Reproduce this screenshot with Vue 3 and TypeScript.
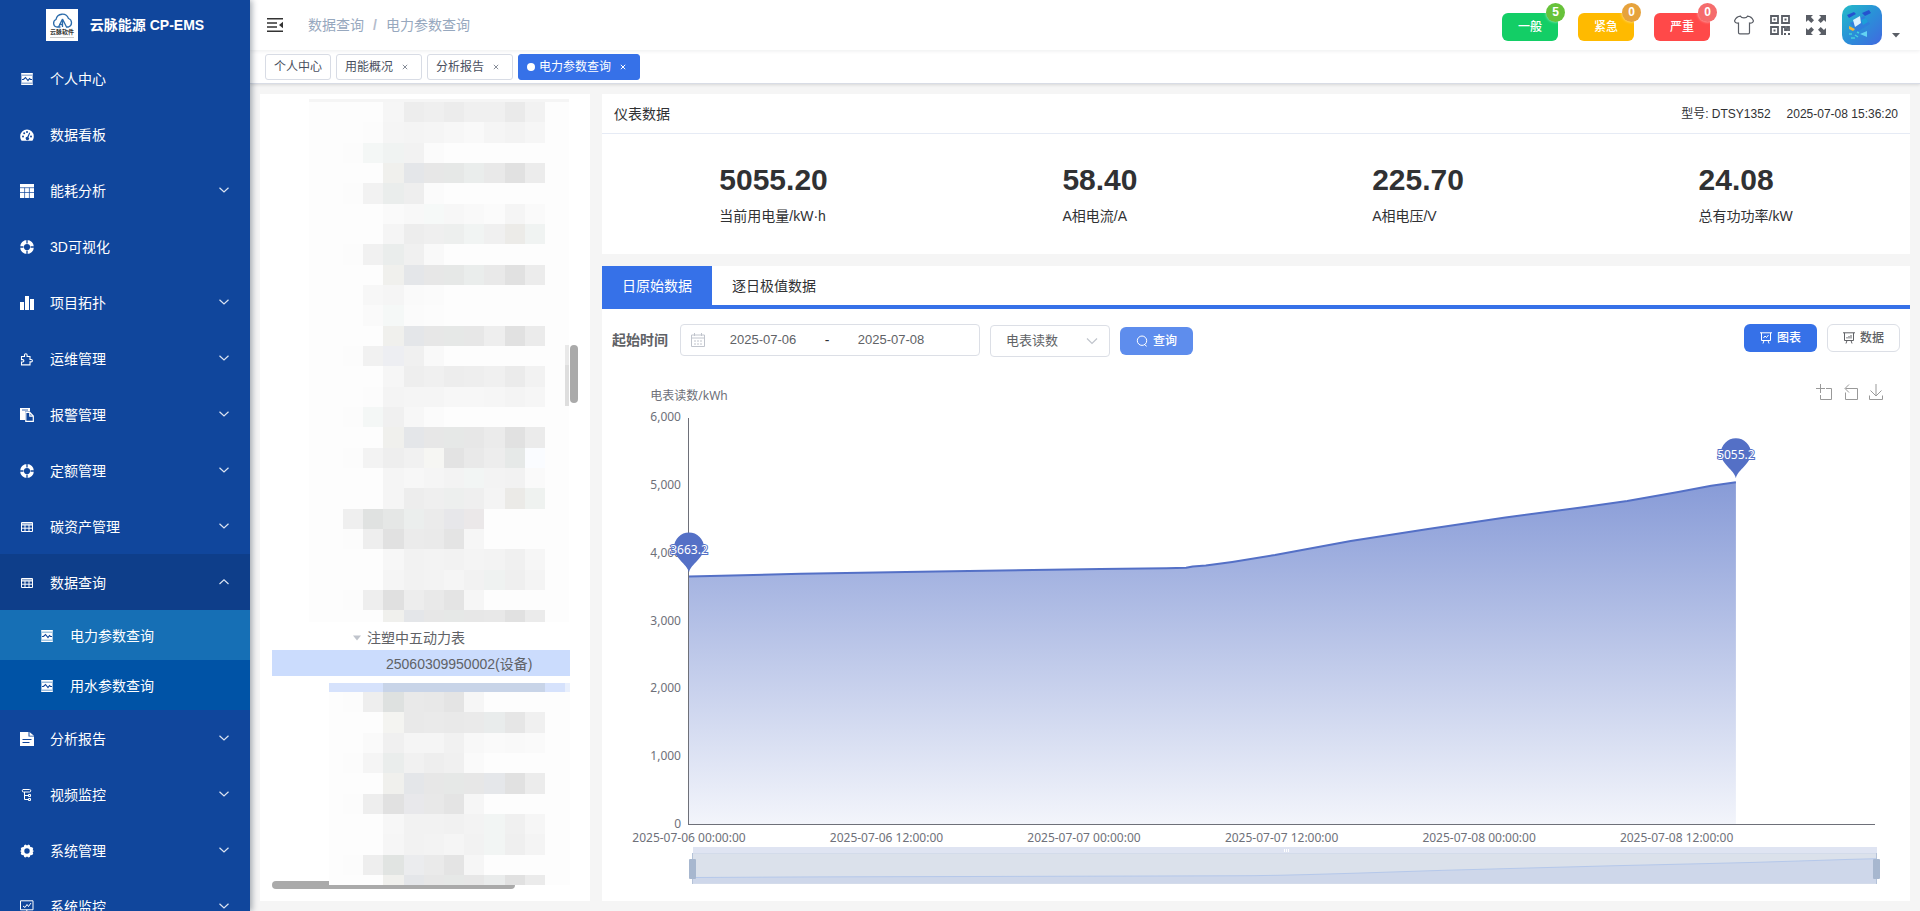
<script setup lang="ts">
import { ref } from 'vue'

interface MenuItem {
  label: string
  icon: string
  group?: boolean
  children?: { label: string; icon: string; active?: boolean }[]
}

const icons: Record<string, string> = {
  wave: '<path fill="#fff" opacity=".6" d="M1 1h12v12H1z"/><path fill="#fff" d="M1.500 1h11v1.500h-11zM2 4h10v6.500H2zM1.500 12h11v1h-11z"/><path stroke="#10469c" stroke-width="1.100" fill="none" d="M2 7.500h1.500l2-2 2.500 3 1.500-2 1 1h1.500"/>',
  gauge: '<path fill="#fff" d="M7 1.500a6.800 6.800 0 0 0-6.800 6.800c0 1.700.5 3.200 1.400 4.400h10.800c.9-1.200 1.400-2.700 1.400-4.400A6.800 6.800 0 0 0 7 1.500z"/><g fill="#10469c"><circle cx="3" cy="8.500" r="1"/><circle cx="4.200" cy="5.200" r="1"/><circle cx="7" cy="4" r="1"/><circle cx="11" cy="8.500" r="1"/><path d="m9.300 4.500.9.400-1.700 4.300a1.700 1.700 0 1 1-1.200-.4z"/></g>',
  grid: '<path fill="#fff" d="M0 0h14v14H0z"/><path stroke="#10469c" stroke-width=".7" d="M0 3.700h14M0 8.500h14M4.600 3.700V14M9.400 3.700V14"/>',
  ring: '<circle cx="7" cy="7" r="5" fill="none" stroke="#fff" stroke-width="3.800"/><path stroke="#10469c" stroke-width="1.300" d="M7 0v3.500M7 10.500V14M0 7h3.500M10.500 7H14"/>',
  bars: '<path fill="#fff" d="M0 6h4v8H0zM5 0h4v14H5zM10 3h4v11h-4z"/>',
  puzzle: '<path fill="none" stroke="#fff" stroke-width="1.100" d="M1.500 4.500h3V3a1.300 1.300 0 0 1 2.600 0v1.500h2.900v3h1.200a1.200 1.200 0 0 1 0 2.400H10v3H1.500V10h1.200a1.200 1.200 0 0 0 0-2.400H1.500z"/>',
  copy: '<path fill="#fff" d="M0 0h10v3.500H5V12H0z"/><path fill="none" stroke="#10469c" stroke-width=".8" d="M2 2h6"/><path fill="none" stroke="#fff" stroke-width="1.200" d="M5.800 4.400h4l3.500 3.700v5.300H5.800zM9.800 4.400v3.800h3.500"/>',
  table: '<path fill="none" stroke="#fff" stroke-width="1" d="M1.500 2.500h11v9h-11zM1.500 5h11M5 5v6.500M9 5v6.500M1.500 8.200h11"/><path fill="#fff" opacity=".55" d="M2 3h10v2H2z"/>',
  doc: '<path fill="#fff" d="M0 0h8.500v4.500H14V14H0z"/><path fill="#fff" d="m9.500 0 4.500 3.700H9.500z"/><path stroke="#10469c" stroke-width="1" d="M2.500 7.500h9M2.500 10.500h7"/>',
  video: '<path fill="none" stroke="#fff" stroke-width="1" d="M3 1.500h6.500a1 1 0 0 1 0 2.500H3.500a1.200 1.200 0 0 1 0-2.500M4.500 4v7.500h4M4.500 7.500h4M8.500 6.500h2v2h-2zM8.500 10.500h2v2h-2z"/>',
  gear: '<path fill="#fff" fill-rule="evenodd" d="M4.200 1.200 5.500.6l1.500 1L8.500.6l1.300.6.5 1.800 1.900.2 1 1.300-.5 1.700L14 7l-1.300 1 .5 1.700-1 1.300-1.900.2-.5 1.800-1.300.6-1.500-1-1.500 1-1.300-.6-.5-1.800-1.900-.2-1-1.300L1.300 8 0 7l1.300-.8L.8 4.500l1-1.300L3.700 3zM7 4.300a2.700 2.700 0 1 0 0 5.400 2.700 2.700 0 0 0 0-5.400z"/>',
  monitor: '<path fill="none" stroke="#fff" stroke-width="1" d="M.5.8h12.500v9H.5zM6.800 9.800V13M3.500 13h6.500M3 6l2 1.500 2-3 1.500 2L11 3"/>',
}

const menu: MenuItem[] = [
  { label: '个人中心', icon: 'wave' },
  { label: '数据看板', icon: 'gauge' },
  { label: '能耗分析', icon: 'grid', group: true },
  { label: '3D可视化', icon: 'ring' },
  { label: '项目拓扑', icon: 'bars', group: true },
  { label: '运维管理', icon: 'puzzle', group: true },
  { label: '报警管理', icon: 'copy', group: true },
  { label: '定额管理', icon: 'ring', group: true },
  { label: '碳资产管理', icon: 'table', group: true },
  {
    label: '数据查询', icon: 'table', group: true,
    children: [
      { label: '电力参数查询', icon: 'wave', active: true },
      { label: '用水参数查询', icon: 'wave' },
    ],
  },
  { label: '分析报告', icon: 'doc', group: true },
  { label: '视频监控', icon: 'video', group: true },
  { label: '系统管理', icon: 'gear', group: true },
  { label: '系统监控', icon: 'monitor', group: true },
]

const tags = [
  { label: '个人中心', closable: false, active: false },
  { label: '用能概况', closable: true, active: false },
  { label: '分析报告', closable: true, active: false },
  { label: '电力参数查询', closable: true, active: true },
]

const alarms = [
  { label: '一般', count: 5, kind: 'normal' },
  { label: '紧急', count: 0, kind: 'urgent' },
  { label: '严重', count: 0, kind: 'severe' },
]

const stats = [
  { value: '5055.20', label: '当前用电量/kW·h' },
  { value: '58.40', label: 'A相电流/A' },
  { value: '225.70', label: 'A相电压/V' },
  { value: '24.08', label: '总有功功率/kW' },
]

const startDate = ref('2025-07-06')
const endDate = ref('2025-07-08')
const metric = ref('电表读数')

// Masked tree rows: one colour per cell, "-" for an empty cell.
const maskTop = [
  '- - f6 ed ef ec f0 f0 eaeaea f2', '- fc f5 f4 f5 f7 f9 f5 f3 f6', 'fc f4f7f6 f0f3f2 f2 fb',
  '- - f0f0ed e4e6e9 e7 e6e8e7 eaedec e9 e1 ec', 'fc f2 eaedec ee fb', '- - fa f8 f6f9f8 f7 f9 fb f5 fa',
  '- - f5 ed ef edefee f1f4f3 f0 ecebe8 f0f3f2', 'fc f1 eaedec f0 f9',
  '- - f0f0ed e4e6e9 e7 e6e8e7 eaedec e9 e1 ec', '- f7 f5 fa fb', '- fa f5f8f7 fb fc',
  '- - f0f0ed e4e6e9 e7 e6e8e7 e7 ee e1 eb', 'fc f1 edeef2 f0 f9', '- - f6 ee f0 ed ee f0 eb f2',
  '- fc f4 f5 f5 f7 f7 f6 f4 f6', 'fc f4f7f6 f0 f7 fb', '- - f0f0ed e4e6e9 e7 e6e8e7 e7 eb e1 eb',
  'fc f3 ee f1 f6f6f3 e3 e9 ed e6e9e8 fafcff', '- - f5 f7 f5 f3 f2f5f4 f3 f2 fa',
  '- - f5 ed ef edefee ef f4 ebeae7 eff2f0', 'ef e0e2e1 e5e7e6 ebeeed eb e7e7ea ebe8e9',
  'fc ee e1 eb ea e4 f6', '- - f7 f2 f3 f2 f4 f3 f0 f6', '- - f5 f2 f3 f5 f2 eff2f1 ef f4',
  'fc ee e0 ed e9 e4 f6', '- - f0f0ed e4e6e9 e7 e6e8e7 e7 e8 e1 eb',
]
const maskBottom = [
  'fc ee dee1e0 e9 e8 e4 f6', '- - f4f4f1 e9 ea e9 ea e9ecec e6 f0', '- fa f0 f5 f5 f1 f8 fa f9 fa',
  'fc f5 eaedec f1 ee f0 fa', '- - f0f0ed e4e6e9 e7 e6e8e7 e7 e5e7ea e1 ec', 'fc ee e1 e8e8eb e8 e4 f6',
  '- - f7 f2 f2 f1 f3 f2f5f4 f0 f6', '- - f6 f2 f3 f5 f2 f2f5f4 ef f4', 'fc ee e1e4e2 ebecee ea e4 f6',
  '- - f0f0ed e4e6e9 e7 e6e8e7 e7 eaecec e1 eb',
]

const edge = (n: number) => Math.round((n * 61) / 3)

function cells(rows: string[], top: number) {
  return rows.flatMap((row, r) =>
    row.split(' ').map((c, k) => ({
      x: 71 + Math.round(k * 20.2),
      y: top + edge(r),
      w: Math.round((k + 1) * 20.2) - Math.round(k * 20.2),
      h: edge(r + 1) - edge(r),
      fill: c === '-' ? 'none' : '#' + (c.length === 2 ? c + c + c : c),
    })),
  )
}
const topCells = cells(maskTop, 3)
const bottomCells = cells(maskBottom, 9)

// Chart geometry and readings (hours since 07-06 00:00, kWh).
const left = 87
const base = 447
const hourPx = 16.46
const kwhPx = 0.0678
const px = (h: number) => Math.round((left + h * hourPx) * 10) / 10
const py = (v: number) => Math.round((base - v * kwhPx) * 10) / 10
const readings: [number, number][] = [
  [0, 3663.2], [6.8, 3707], [15, 3740], [25, 3775], [29, 3788], [30.2, 3794], [30.6, 3812], [31.4, 3826],
  [33, 3880], [35.6, 3983], [40.2, 4189], [44.9, 4366], [49.6, 4535], [54.2, 4683], [57, 4779],
  [60.1, 4912], [62.1, 5005], [63.6, 5055.2],
]
const linePath = 'M' + readings.map(([h, v]) => `${px(h)} ${py(v)}`).join('L')
const areaPath = `${linePath}V${base}H${left}Z`
const zoomLine = 'M' + readings.map(([h, v]) => `${Math.round(91 + (h / 63.6) * 1184)} ${Math.round((499.5 - (v - 3663) * 0.0135) * 10) / 10}`).join('L')
const zoomArea = `${zoomLine}V505H91Z`
const yTicks = [6000, 5000, 4000, 3000, 2000, 1000, 0]
const xTicks = ['2025-07-06 00:00:00', '2025-07-06 12:00:00', '2025-07-07 00:00:00', '2025-07-07 12:00:00', '2025-07-08 00:00:00', '2025-07-08 12:00:00']
const pins = [readings[0], readings[readings.length - 1]]
</script>

<template>
  <div class="app">
    <aside class="sidebar">
      <div class="brand">
        <svg class="logo" width="32" height="32" viewBox="0 0 32 32" aria-hidden="true">
          <rect width="32" height="32" fill="#fff" />
          <path d="M10.500 18a4 4 0 0 1-.5-7.500 6.500 6.500 0 0 1 12.500-1 4.500 4.500 0 0 1 0 8.500h-2.500M12.500 18l4-8v8M16.500 10l4 8M13 15.500h3.500M10.500 18h4" fill="none" stroke="#2c6cab" stroke-width="1.300" />
          <text x="16" y="25" font-size="6" font-weight="700" text-anchor="middle" fill="#333">云脉软件</text>
          <path d="M4 28.500h24" stroke="#999" stroke-width=".5" />
        </svg>
        <h1>云脉能源 CP-EMS</h1>
      </div>
      <nav>
        <template v-for="item in menu" :key="item.label">
          <component :is="item.group ? 'button' : 'a'" class="menu-item" :class="{ open: item.children }" :href="item.group ? undefined : '#'">
            <svg class="menu-icon" width="14" height="14" viewBox="0 0 14 14" aria-hidden="true" v-html="icons[item.icon]"></svg>
            <span>{{ item.label }}</span>
            <svg v-if="item.group" class="chevron" width="12" height="12" viewBox="0 0 12 12" aria-hidden="true">
              <path :d="item.children ? 'M1.500 7 6 2.800 10.500 7' : 'M1.500 2.800 6 7l4.500-4.200'" fill="none" stroke="#dbe4f2" stroke-width="1.200" />
            </svg>
          </component>
          <a v-for="child in item.children" :key="child.label" class="sub-item" :class="{ active: child.active }" href="#">
            <svg class="menu-icon" width="12" height="14" viewBox="1 0 12 14" aria-hidden="true" v-html="icons[child.icon]"></svg>
            <span>{{ child.label }}</span>
          </a>
        </template>
      </nav>
    </aside>

    <div class="main">
      <header class="topbar">
        <button class="icon-btn" aria-label="折叠菜单">
          <svg width="16" height="16" viewBox="0 0 16 16"><path d="M0 1.700h16M0 6h10M0 10h10M0 14.300h16" stroke="#333" stroke-width="1.600" /><path d="M16 4.800v6.400L12 8z" fill="#333" /></svg>
        </button>
        <nav class="breadcrumb"><a href="#">数据查询</a><i>/</i><span>电力参数查询</span></nav>
        <div class="top-right">
          <button v-for="a in alarms" :key="a.label" class="alarm" :class="a.kind">{{ a.label }}<sup>{{ a.count }}</sup></button>
          <button class="icon-btn tool" aria-label="主题">
            <svg width="20" height="20" viewBox="0 0 20 20"><path d="M6.500 1.200C7.500 3.300 12.500 3.300 13.500 1.200c2.500.2 4.700 1.800 5.800 4.300.5 1.400-1.600 3-3.800 2.500V17.500q0 1.300-1.300 1.300H5.800q-1.300 0-1.300-1.300V8C2.300 8.500.2 6.900.7 5.500 1.800 3 4 1.400 6.500 1.200z" fill="none" stroke="#5a5e66" stroke-width="1.200" /></svg>
          </button>
          <button class="icon-btn tool" aria-label="二维码">
            <svg width="20" height="20" viewBox="0 0 20 20" fill="none" stroke="#5a5e66" stroke-width="1.800"><path d="M1 1h7v7H1zM12 1h7v7h-7zM1 12h7v7H1z" /><path d="M4.500 3.500v2M15.500 3.500v2M4.500 14.500v2" stroke-width="2" /><path d="M12 20v-8h3v3h2v-3h2v4M14 19h2M18 19h2" /></svg>
          </button>
          <button class="icon-btn tool" aria-label="全屏">
            <svg width="20" height="20" viewBox="0 0 20 20" fill="#5a5e66"><path d="M0 0h7L4.900 2.100 8 5.300 5.300 8 2.100 4.900 0 7zM20 0v7l-2.100-2.100L14.700 8 12 5.300l3.100-3.200L13 0zM0 20v-7l2.100 2.100L5.300 12 8 14.700l-3.100 3.200L7 20zM20 20h-7l2.100-2.100L12 14.700l2.700-2.700 3.200 3.100L20 13z" /></svg>
          </button>
          <button class="icon-btn avatar" aria-label="用户">
            <svg width="40" height="40" viewBox="0 0 40 40">
              <defs><linearGradient id="av" x1="0" y1="0" x2="1" y2="1"><stop offset="0" stop-color="#24bcc8" /><stop offset=".5" stop-color="#2a90d8" /><stop offset="1" stop-color="#4168e0" /></linearGradient></defs>
              <rect width="40" height="40" rx="10" fill="url(#av)" />
              <path d="m5 10 7-3 2 2-7 4zM20 8l7-3 2 3-6 3z" fill="#2453cf" />
              <path d="m8 18 14-7 6 8-13 8z" fill="#2f7fdc" />
              <path d="m11 15 7-4 1 7-6 4z" fill="#d8f0ff" /><path d="m19 15 5-2 2 4-5 3z" fill="#1d9fd8" />
              <path d="m7 21 6 3-2 2-4-2z" fill="#f2b63c" /><path d="m18 29 7-3v6z" fill="#63d3f2" />
              <path d="M7 29h3M9 33h4M13 30l3 2M15 27l2 1" stroke="#43d0dc" stroke-width="1.500" fill="none" />
            </svg>
            <svg class="caret" width="8" height="5" viewBox="0 0 8 5"><path d="M0 0h8L4 4.500z" fill="#5a5e66" /></svg>
          </button>
        </div>
      </header>

      <div class="tags">
        <div v-for="t in tags" :key="t.label" class="tag" :class="{ active: t.active }">
          <i v-if="t.active" class="dot"></i>
          <a href="#">{{ t.label }}</a>
          <button v-if="t.closable" aria-label="关闭">
            <svg width="6" height="6" viewBox="0 0 6 6"><path d="m.8.8 4.400 4.400M5.200.8.8 5.200" stroke="currentColor" /></svg>
          </button>
        </div>
      </div>

      <main class="content">
        <section class="card tree">
          <svg class="mask" width="298" height="523" viewBox="0 0 298 523" shape-rendering="crispEdges" aria-hidden="true">
            <path d="M37 0h260v3H37z" fill="#f5f5f5" /><path d="M37 3h260v520H37z" fill="#fdfdfd" />
            <rect v-for="(c, i) in topCells" :key="i" :x="c.x" :y="c.y" :width="c.w" :height="c.h" :fill="c.fill" />
            <path d="M293 246h4v20h-4z" fill="#e9e9e9" /><path d="M293 266h4v41h-4z" fill="#dedede" />
          </svg>
          <div class="node parent">
            <svg width="8" height="6" viewBox="0 0 8 6"><path d="M0 .5h8L4 5.500z" fill="#c0c4cc" /></svg>注塑中五动力表
          </div>
          <div class="node selected">25060309950002(设备)</div>
          <svg class="mask lower" width="298" height="202" viewBox="0 0 298 202" shape-rendering="crispEdges" aria-hidden="true">
            <path d="M57 9h241v193H57z" fill="#fdfdfd" /><path d="M57 0h241v9H57z" fill="#d6e2fc" />
            <path d="M111 0h162v9H111z" fill="#c8d4e8" /><path d="M293 0h5v9h-5z" fill="#e8effd" />
            <rect v-for="(c, i) in bottomCells" :key="i" :x="c.x" :y="c.y" :width="c.w" :height="c.h" :fill="c.fill" />
          </svg>
          <i class="bar-v"></i>
          <i class="bar-h"></i>
        </section>

        <div class="right">
          <section class="card">
            <div class="card-head">
              <h2>仪表数据</h2>
              <span>型号: DTSY1352</span><span>2025-07-08 15:36:20</span>
            </div>
            <div class="stats">
              <div v-for="s in stats" :key="s.label"><strong>{{ s.value }}</strong><p>{{ s.label }}</p></div>
            </div>
          </section>

          <section class="card panel">
            <div class="tabs">
              <button class="on">日原始数据</button><button>逐日极值数据</button>
            </div>
            <form class="filters" @submit.prevent>
              <label for="start">起始时间</label>
              <div class="range">
                <svg width="14" height="14" viewBox="0 0 14 14" fill="none" stroke="#c0c4cc"><path d="M.5 2h13v11.500H.5zM.5 5h13M3.500 0v3M10.500 0v3M3 8h2M6 8h2M9 8h2M3 11h2M6 11h2M9 11h2" /></svg>
                <input id="start" v-model="startDate" type="text" /><span>-</span>
                <input v-model="endDate" type="text" aria-label="结束时间" />
              </div>
              <div class="select">
                <select v-model="metric" aria-label="参数类型"><option>电表读数</option></select>
                <svg width="12" height="12" viewBox="0 0 12 12"><path d="m1 3.500 5 5 5-5" fill="none" stroke="#c0c4cc" stroke-width="1.200" /></svg>
              </div>
              <button class="btn query">
                <svg width="12" height="12" viewBox="0 0 12 12" fill="none" stroke="#fff"><circle cx="6" cy="5.700" r="4.700" /><path d="m8.200 9.300 2.500 2" /></svg>查询
              </button>
              <span class="spacer"></span>
              <button class="btn primary">
                <svg width="12" height="12" viewBox="0 0 12 12" fill="none" stroke="currentColor"><path d="M0 .8h12M1.500.8v7.700h9V.8M4 8.500 3 11.500M8 8.500l1 3M3.500 6l1.500-2 1.500 1.500 2-2.500" /></svg>图表
              </button>
              <button class="btn plain">
                <svg width="12" height="12" viewBox="0 0 12 12" fill="none" stroke="currentColor"><path d="M0 .8h12M1.500.8v7.700h9V.8M4 8.500 3 11.500M8 8.500l1 3M4 6.500V5M6 6.500V4M8 6.500V3" /></svg>数据
              </button>
            </form>
            <svg class="chart" viewBox="0 0 1308 523" role="img" aria-label="电表读数">
              <defs>
                <linearGradient id="fill" x1="0" y1="0" x2="0" y2="1"><stop offset="0" stop-color="#5470c6" stop-opacity=".7" /><stop offset="1" stop-color="#5470c6" stop-opacity=".07" /></linearGradient>
              </defs>
              <g class="muted">
                <text :x="left" y="22" text-anchor="middle">电表读数/kWh</text>
                <text v-for="t in yTicks" :key="t" x="79" :y="py(t) + 3" text-anchor="end">{{ t.toLocaleString('en-US') }}</text>
                <text v-for="(t, i) in xTicks" :key="t" :x="px(i * 12)" y="464" text-anchor="middle">{{ t }}</text>
              </g>
              <path :d="areaPath" fill="url(#fill)" />
              <path d="M86 40h1v407h-1zM86 446h1187v1H86z" fill="#6e7079" shape-rendering="crispEdges" />
              <path :d="linePath" fill="none" stroke="#5470c6" stroke-width="2" stroke-linejoin="round" />
              <g v-for="p in pins" :key="p[1]">
                <path :transform="`translate(${px(p[0])} ${py(p[1])})`" d="M0-4C-2-13-15-18-15-29a15 15 0 0 1 30 0C15-18 2-13 0-4z" fill="#5470c6" />
                <text class="pin" :x="px(p[0])" :y="py(p[1]) - 23" text-anchor="middle">{{ p[1] }}</text>
              </g>
              <g fill="none" stroke="#999">
                <path d="M1214 10.500h9M1218.500 6v9M1218.500 17v4.500h11V10.500H1224" />
                <path d="M1243.500 14.500v7h12V10.500h-12M1247 6.500l-4 4 4 4" />
                <path d="M1267.500 17.500v4h13v-4M1274 6v12M1268.500 12.500l5.500 5.500 5.500-5.500" />
              </g>
              <path d="M91 469h1184v6H91z" fill="#dfe4f2" />
              <path d="M91 475h1184v30H91z" fill="#dbe1eb" />
              <path :d="zoomArea" fill="#ced7ea" />
              <path :d="zoomLine" fill="none" stroke="#b5c8ea" />
              <path d="M682.500 471v3M684.500 471v3M686.500 471v3" stroke="#fff" />
              <path d="M91 475.500h1184M91 505.500h1184" stroke="#d3dbea" />
              <path d="M90.500 475v31M1274.500 475v31" stroke="#b4c2d8" />
              <rect x="87" y="481" width="7" height="20" rx="1" fill="#a7b7cf" /><rect x="1271" y="481" width="7" height="20" rx="1" fill="#a7b7cf" />
            </svg>
          </section>
        </div>
      </main>
    </div>
  </div>
</template>

<style>
html, body { margin: 0; overflow: hidden; }
</style>

<style scoped>
.app, .app * { box-sizing: border-box; }
.app { display: flex; height: 100vh; background: #f5f5f5; color: #303133; font: 14px/20px "Liberation Sans", "Noto Sans CJK SC", sans-serif; }
button { font: inherit; border: 0; background: none; padding: 0; margin: 0; color: inherit; }
a { color: inherit; text-decoration: none; }
h1, h2, p { margin: 0; font-weight: 400; }
i { font-style: normal; }
svg { display: block; flex: none; }

.sidebar { width: 250px; flex: none; overflow: hidden; background: #10469c; color: #fff; box-shadow: 2px 0 6px rgba(0, 21, 41, .35); z-index: 2; }
.brand { height: 50px; display: flex; align-items: center; justify-content: center; gap: 12px; }
.brand h1 { font-size: 14px; font-weight: 700; white-space: nowrap; }
.menu-item { display: flex; align-items: center; width: 100%; height: 56px; padding: 1px 20px 0; text-align: left; }
.menu-item span { margin-left: 16px; flex: 1; }
.menu-item.open { background: #0e3e8a; }
.sub-item { display: flex; align-items: center; height: 50px; padding: 1px 0 0 41px; background: #0053a6; }
.sub-item span { margin-left: 17px; }
.sub-item.active { background: #166fb5; }

.main { flex: 1; min-width: 0; display: flex; flex-direction: column; }
.topbar { display: flex; align-items: center; flex: none; height: 50px; padding: 0 20px 0 17px; background: #fff; box-shadow: 0 1px 4px rgba(0, 21, 41, .08); z-index: 1; }
.breadcrumb { display: flex; margin-left: 25px; color: #97a8be; }
.breadcrumb i { margin: 0 9px; color: #b4bccc; font-weight: 700; }
.top-right { display: flex; align-items: center; margin-left: auto; }
.alarm { position: relative; width: 56px; height: 28px; margin: 4px 20px 0 0; border-radius: 6px; color: #fff; font-size: 12px; font-weight: 500; }
.alarm sup { position: absolute; top: -10px; right: -7px; width: 19px; height: 19px; border-radius: 10px; font-size: 12px; font-weight: 700; line-height: 19px; text-align: center; box-shadow: 0 0 3px rgba(255, 255, 255, .7); }
.normal { background: #13ce66; }
.normal sup { background: #67c23a; }
.urgent { background: #ffba00; }
.urgent sup { background: #e6a23c; }
.severe { background: #ff4949; }
.severe sup { background: #f56c6c; }
.tool { margin: 0 0 0 16px; }
.alarm + .tool { margin-left: 4px; }
.avatar { display: flex; align-items: flex-end; gap: 10px; margin-left: 16px; }
.caret { margin-bottom: 7px; }

.tags { display: flex; gap: 5px; flex: none; height: 34px; padding: 4px 15px 0; background: #fff; border-bottom: 1px solid #d8dce5; box-shadow: 0 1px 3px rgba(0, 0, 0, .12); }
.tag { display: flex; align-items: center; height: 26px; padding: 0 8px; border: 1px solid #d8dce5; border-radius: 3px; color: #495060; font-size: 12px; }
.tag button { display: flex; align-items: center; justify-content: center; width: 16px; height: 16px; margin-left: 4px; color: #888e99; }
.tag.active { background: #3671e8; border-color: #3671e8; color: #fff; }
.tag.active button { color: #fff; }
.dot { width: 8px; height: 8px; margin-right: 4px; border-radius: 50%; background: #fff; }

.content { flex: 1; min-height: 0; display: flex; gap: 12px; padding: 10px; }
.card { background: #fff; }
.tree { position: relative; width: 330px; flex: none; padding: 5px 12px 12px; overflow: hidden; color: #606266; }
.node { display: flex; align-items: center; height: 26px; width: 298px; padding-top: 1px; }
.parent { gap: 6px; margin-top: 2px; padding-left: 81px; }
.selected { padding-left: 114px; background: #cbdcfd; }
.lower { margin-top: 7px; }
.mask { position: relative; z-index: 1; }
.bar-v, .bar-h { position: absolute; border-radius: 4px; background: #aaa; }
.bar-v { right: 12px; top: 251px; width: 8px; height: 58px; }
.bar-h { left: 12px; bottom: 12px; width: 243px; height: 8px; }
.right { flex: 1; min-width: 0; display: flex; flex-direction: column; gap: 12px; }
.card-head { display: flex; align-items: center; gap: 16px; height: 40px; padding: 0 12px; border-bottom: 1px solid #e6ebf5; font-size: 12px; }
.card-head h2 { margin-right: auto; font-size: 14px; }
.stats { display: flex; justify-content: space-around; height: 120px; padding-top: 28px; }
.stats strong { display: block; font-size: 30px; line-height: 36px; }
.stats p { margin-top: 8px; }

.panel { flex: 1; min-height: 0; overflow: hidden; }
.tabs { display: flex; border-bottom: 4px solid #3671e8; }
.tabs button { height: 39px; padding: 0 20px; }
.tabs .on { background: #3671e8; color: #fff; }
.filters { display: flex; align-items: flex-start; height: 69px; padding: 15px 10px 0; }
.filters label { font-weight: 700; color: #606266; line-height: 32px; margin-right: 12px; }
.range { display: flex; align-items: center; width: 300px; height: 32px; padding: 0 10px; border: 1px solid #dcdfe6; border-radius: 4px; color: #303133; }
.range input { width: 116px; border: 0; padding: 0; background: none; text-align: center; font: inherit; font-size: 13px; color: #606266; outline: 0; }
.range span { width: 12px; text-align: center; }
.select { position: relative; width: 120px; margin: 1px 10px 0; }
.select select { width: 100%; height: 32px; padding: 0 15px; border: 1px solid #dcdfe6; border-radius: 4px; appearance: none; background: #fff; font: inherit; font-size: 13px; color: #606266; }
.select svg { position: absolute; right: 12px; top: 10px; pointer-events: none; }
.btn { display: flex; align-items: center; justify-content: center; gap: 5px; width: 73px; height: 28px; border: 1px solid transparent; border-radius: 6px; font-size: 12px; font-weight: 500; }
.query { margin-top: 3px; background: #5e8ded; color: #fff; }
.spacer { flex: 1; }
.primary { background: #3671e8; color: #fff; }
.plain { margin-left: 10px; border-color: #dcdfe6; background: #fff; color: #606266; }
.chart { width: 100%; height: auto; }
.chart text { font: 12px "Noto Sans", "Noto Sans CJK SC", sans-serif; }
.muted { fill: #6e7079; }
.chart .pin { fill: #fff; stroke: #5470c6; stroke-width: 2px; paint-order: stroke; }
</style>
